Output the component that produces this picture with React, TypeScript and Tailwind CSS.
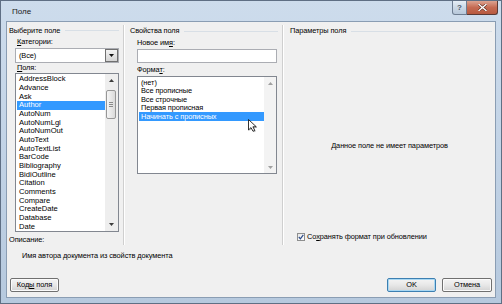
import React from "react";

function Tri({ dir, color = "#000" }: { dir: "up" | "down"; color?: string }) {
  return (
    <svg width="5" height="3" viewBox="0 0 5 3" className="block">
      <path d={dir === "up" ? "M0 3 L2.5 0 L5 3 Z" : "M0 0 L5 0 L2.5 3 Z"} fill={color} />
    </svg>
  );
}

function GroupHeader({ title, line = true }: { title: string; line?: boolean }) {
  return (
    <div className="flex items-center h-[12px]">
      <span className="whitespace-nowrap">{title}</span>
      {line && <div className="flex-1 h-px bg-[#d8dfe6] ml-[5px]" />}
    </div>
  );
}

function Button({ children, def = false, className = "" }: { children: React.ReactNode; def?: boolean; className?: string }) {
  return (
    <div
      className={`h-[14px] rounded-[2px] border flex items-center justify-center bg-gradient-to-b from-[#f4f4f4] via-[#e8e8e8] to-[#d3d3d3] ${
        def ? "border-[#3c7fb1] shadow-[inset_0_0_0_1px_#a9d8f3]" : "border-[#707070] shadow-[inset_0_0_0_1px_#fbfbfb]"
      } ${className}`}
    >
      {children}
    </div>
  );
}

const leftItems = [
  "AddressBlock",
  "Advance",
  "Ask",
  "Author",
  "AutoNum",
  "AutoNumLgl",
  "AutoNumOut",
  "AutoText",
  "AutoTextList",
  "BarCode",
  "Bibliography",
  "BidiOutline",
  "Citation",
  "Comments",
  "Compare",
  "CreateDate",
  "Database",
  "Date",
];

const formatItems = ["(нет)", "Все прописные", "Все строчные", "Первая прописная", "Начинать с прописных"];

function Separator() {
  return (
    <div className="flex h-[220px] shrink-0">
      <div className="w-px bg-[#cfcfcf]" />
      <div className="w-px bg-white" />
    </div>
  );
}

export default function App() {
  return (
    <div className="w-[502px] h-[304px] overflow-hidden flex flex-col border border-[#5f6f84] bg-gradient-to-b from-[#cddcec] via-[#c2d3e6] to-[#b6c9de] font-['Liberation_Sans',Arial,sans-serif] text-[7.4px] tracking-[-0.1px] text-black leading-none">
      {/* Title bar */}
      <div className="h-[20px] flex items-start shrink-0">
        <span className="ml-[11px] mt-[7px] text-[8px] tracking-normal text-[#1a1a1a]">Поле</span>
        <div className="ml-auto mr-[3px] flex">
          <div className="w-[15px] h-[14px] rounded-bl-[3px] border border-[#6d7d91] border-t-0 bg-gradient-to-b from-[#e6eef6] via-[#cbd8e6] to-[#b7c8da] flex items-center justify-center text-[8px] font-bold text-[#4b5868]">
            ?
          </div>
          <div className="w-[31px] h-[14px] rounded-br-[3px] border border-l-0 border-t-0 border-[#5b3a35] bg-gradient-to-b from-[#dca391] via-[#c56a52] to-[#b75a40] flex items-center justify-center">
            <svg width="9" height="7" viewBox="0 0 9 7">
              <path d="M1 0.5 L8 6.5 M8 0.5 L1 6.5" stroke="#5a2b20" strokeWidth="2.6" strokeLinecap="square" />
              <path d="M1 0.5 L8 6.5 M8 0.5 L1 6.5" stroke="#ffffff" strokeWidth="1.4" strokeLinecap="square" />
            </svg>
          </div>
        </div>
      </div>

      {/* Body */}
      <div className="flex-1 px-[5px] pb-[5px] flex">
        <div className="flex-1 border border-[#8a9db3] bg-[#f0f0f0] flex flex-col relative">
          {/* Columns */}
          <div className="flex mt-[3px] h-[220px]">
            {/* Left column */}
            <div className="w-[116px] shrink-0 pl-[2px] pr-[4px] flex flex-col">
              <GroupHeader title="Выберите поле" />
              <div className="h-[13px] pl-[8px] flex items-center">
                <span>
                  <span className="underline">К</span>атегории:
                </span>
              </div>
              <div className="ml-[6px] w-[104px] h-[15px] border border-[#abadb3] bg-white flex items-center">
                <span className="pl-[3px] flex-1">(Все)</span>
                <div className="w-[13px] h-[13px] border border-[#707070] bg-gradient-to-b from-[#f3f3f3] to-[#d4d4d4] flex items-center justify-center">
                  <Tri dir="down" color="#111" />
                </div>
              </div>
              <div className="h-[11px] pl-[8px] flex items-center">
                <span>
                  <span className="underline">П</span>оля:
                </span>
              </div>
              <div className="ml-[6px] w-[104px] h-[159px] shrink-0 border border-[#828790] bg-white flex">
                <div className="flex-1 pl-px pt-px flex flex-col overflow-hidden text-[7.6px] tracking-normal">
                  {leftItems.map((it) => (
                    <div
                      key={it}
                      className={`h-[8.67px] shrink-0 flex items-center pl-[2px] whitespace-nowrap ${
                        it === "Author" ? "bg-[#3399ff] text-white" : ""
                      }`}
                    >
                      {it}
                    </div>
                  ))}
                </div>
                <div className="w-[13px] shrink-0 flex flex-col bg-[#eeeeee]">
                  <div className="h-[13px] flex items-center justify-center">
                    <Tri dir="up" color="#3c3c3c" />
                  </div>
                  <div className="mt-[3px] ml-[1px] w-[10px] h-[29px] rounded-[2px] border border-[#979797] bg-gradient-to-r from-[#f6f6f6] to-[#dadada] flex flex-col items-center justify-center gap-[1px]">
                    <div className="w-[4px] h-px bg-[#8a8a8a]" />
                    <div className="w-[4px] h-px bg-[#8a8a8a]" />
                    <div className="w-[4px] h-px bg-[#8a8a8a]" />
                  </div>
                  <div className="flex-1" />
                  <div className="h-[13px] flex items-center justify-center">
                    <Tri dir="down" color="#3c3c3c" />
                  </div>
                </div>
              </div>
              <div className="mt-[3px] h-[11px] flex items-center">Описание:</div>
            </div>

            <Separator />

            {/* Middle column */}
            <div className="w-[157px] shrink-0 pl-[5px] pr-[4px] flex flex-col">
              <GroupHeader title="Свойства поля" />
              <div className="h-[12px] pl-[7px] flex items-center">
                <span>
                  Новое им<span className="underline">я</span>:
                </span>
              </div>
              <div className="ml-[7px] w-[140px] h-[14px] border border-[#abadb3] bg-white" />
              <div className="h-[13px] pl-[7px] flex items-center">
                <span>
                  Форма<span className="underline">т</span>:
                </span>
              </div>
              <div className="ml-[7px] w-[140px] h-[98px] border border-[#828790] bg-white flex relative">
                <div className="flex-1 pl-px pt-[1px] flex flex-col">
                  {formatItems.map((it, i) => (
                    <div
                      key={it}
                      className={`h-[8.5px] shrink-0 flex items-center pl-[2px] whitespace-nowrap ${
                        i === 4 ? "bg-[#3399ff] text-white" : ""
                      }`}
                    >
                      {it}
                    </div>
                  ))}
                </div>
                <div className="w-[12px] shrink-0 flex flex-col bg-[#f3f3f3]">
                  <div className="h-[12px] flex items-center justify-center">
                    <Tri dir="up" color="#a0a0a0" />
                  </div>
                  <div className="flex-1" />
                  <div className="h-[12px] flex items-center justify-center">
                    <Tri dir="down" color="#a0a0a0" />
                  </div>
                </div>
                {/* mouse cursor */}
                <svg
                  className="absolute left-[110px] top-[42px]"
                  width="11"
                  height="14"
                  viewBox="0 0 11 14"
                >
                  <path d="M1.5 1.5 L1.5 12 L4 9.6 L6 13.3 L7.8 12.4 L5.9 8.8 L9.3 8.8 Z" fill="#000" opacity="0.25" />
                  <path d="M0.5 0.5 L0.5 11 L3 8.6 L5 12.3 L6.8 11.4 L4.9 7.8 L8.3 7.8 Z" fill="#fff" stroke="#000" strokeWidth="0.8" strokeLinejoin="round" />
                </svg>
              </div>
            </div>

            <Separator />

            {/* Right column */}
            <div className="flex-1 pl-[6px] pr-[3px] flex flex-col">
              <GroupHeader title="Параметры поля" />
              <div className="mt-[104px] h-[10px] flex items-center justify-center pr-[3px]">
                Данное поле не имеет параметров
              </div>
              <div className="mt-[81px] h-[10px] pl-[7px] flex items-center gap-[2px]">
                <div className="w-[8px] h-[8px] border border-[#8e8f8f] bg-gradient-to-br from-[#e8e8e8] to-[#ffffff] flex items-center justify-center">
                  <svg width="6" height="6" viewBox="0 0 6 6">
                    <path d="M0.8 3 L2.4 4.8 L5.3 0.8" fill="none" stroke="#2a4a8a" strokeWidth="1.2" />
                  </svg>
                </div>
                <span>
                  Со<span className="underline">х</span>ранять формат при обновлении
                </span>
              </div>
            </div>
          </div>

          {/* Description */}
          <div className="mt-[5px] h-[12px] pl-[15px] flex items-center">
            Имя автора документа из свойств документа
          </div>

          {/* Buttons */}
          <div className="mt-[16px] flex pl-[3px] pr-[3px]">
            <Button className="w-[49px]">
              <span>
                Код<span className="underline">ы</span> поля
              </span>
            </Button>
            <Button def className="w-[49px] ml-auto">
              OK
            </Button>
            <Button className="w-[50px] ml-[6px]">Отмена</Button>
          </div>
        </div>
      </div>
    </div>
  );
}
